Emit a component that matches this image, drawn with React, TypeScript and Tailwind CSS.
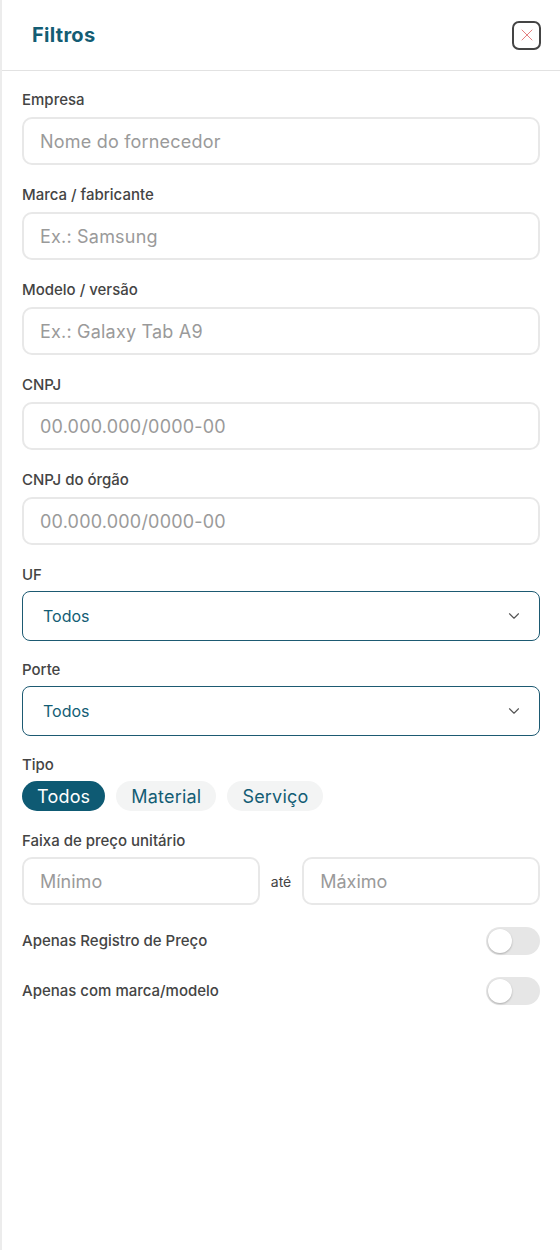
import { ChevronDown, X } from 'lucide-react'

const textFields = [
  { label: 'Empresa', placeholder: 'Nome do fornecedor' },
  { label: 'Marca / fabricante', placeholder: 'Ex.: Samsung' },
  { label: 'Modelo / versão', placeholder: 'Ex.: Galaxy Tab A9' },
  { label: 'CNPJ', placeholder: '00.000.000/0000-00' },
  { label: 'CNPJ do órgão', placeholder: '00.000.000/0000-00' },
]

function Label({ children, mb = 'mb-[6px]' }: { children: string; mb?: string }) {
  return (
    <div className={`text-[15px] leading-5 font-medium text-[#444] ${mb}`}>
      {children}
    </div>
  )
}

function Toggle() {
  return (
    <div className="w-[54px] h-[28px] rounded-full bg-[#e6e6e6] flex items-center px-[2px]">
      <div className="w-[24px] h-[24px] rounded-full bg-white shadow-[0_1px_2px_rgba(0,0,0,0.25)]" />
    </div>
  )
}

export default function App() {
  const tipos = ['Todos', 'Material', 'Serviço']

  return (
    <div
      className="w-[560px] h-[1250px] bg-white border-l-2 border-[#ececec]"
      style={{ fontFamily: 'Inter, "Noto Sans", sans-serif' }}
    >
      {/* Header */}
      <div className="h-[71px] flex items-center justify-between pl-[30px] pr-[19px] border-b border-[#e2e2e2]">
        <h1 className="text-[20px] font-bold text-[#135d74] tracking-[0.3px]">Filtros</h1>
        <button className="w-[29px] h-[29px] rounded-[7px] border-2 border-[#444] flex items-center justify-center">
          <X className="w-[20px] h-[20px] text-[#e58080]" strokeWidth={1.2} />
        </button>
      </div>

      <div className="px-[20px] pt-[19px] flex flex-col">
        {textFields.map(field => (
          <div key={field.label} className="mb-[20px]">
            <Label mb="mb-[7px]">{field.label}</Label>
            <div className="h-[48px] rounded-[10px] border-2 border-[#e8e8e8] flex items-center px-[16px]">
              <span className="text-[18px] tracking-[0.2px] text-[#9a9a9a]">{field.placeholder}</span>
            </div>
          </div>
        ))}

        {['UF', 'Porte'].map(label => (
          <div key={label} className="mb-[19px]">
            <Label>{label}</Label>
            <div className="h-[50px] rounded-[8px] border-[1.5px] border-[#1d5a72] flex items-center justify-between pl-[20px] pr-[16px]">
              <span className="text-[16px] text-[#135d74]">Todos</span>
              <ChevronDown className="w-[18px] h-[18px] text-[#555]" strokeWidth={1.5} />
            </div>
          </div>
        ))}

        <div className="mb-[20px]">
          <Label>Tipo</Label>
          <div className="flex gap-[11px]">
            {tipos.map((tipo, i) => (
              <span
                key={tipo}
                className={`h-[30px] rounded-full px-[15px] flex items-center text-[18px] tracking-[0.2px] ${
                  i === 0 ? 'bg-[#0e5a73] text-white' : 'bg-[#f3f4f4] text-[#135d74]'
                }`}
              >
                {tipo}
              </span>
            ))}
          </div>
        </div>

        <div className="mb-[22px]">
          <Label>Faixa de preço unitário</Label>
          <div className="flex items-center gap-[11px]">
            <div className="flex-1 h-[48px] rounded-[10px] border-2 border-[#e8e8e8] flex items-center px-[16px]">
              <span className="text-[18px] text-[#9a9a9a]">Mínimo</span>
            </div>
            <span className="text-[14px] text-[#444]">até</span>
            <div className="flex-1 h-[48px] rounded-[10px] border-2 border-[#e8e8e8] flex items-center px-[16px]">
              <span className="text-[18px] text-[#9a9a9a]">Máximo</span>
            </div>
          </div>
        </div>

        <div className="flex items-center justify-between h-[28px] mb-[22px]">
          <span className="text-[15px] font-medium text-[#444]">Apenas Registro de Preço</span>
          <Toggle />
        </div>
        <div className="flex items-center justify-between h-[28px]">
          <span className="text-[15px] font-medium text-[#444]">Apenas com marca/modelo</span>
          <Toggle />
        </div>
      </div>
    </div>
  )
}
